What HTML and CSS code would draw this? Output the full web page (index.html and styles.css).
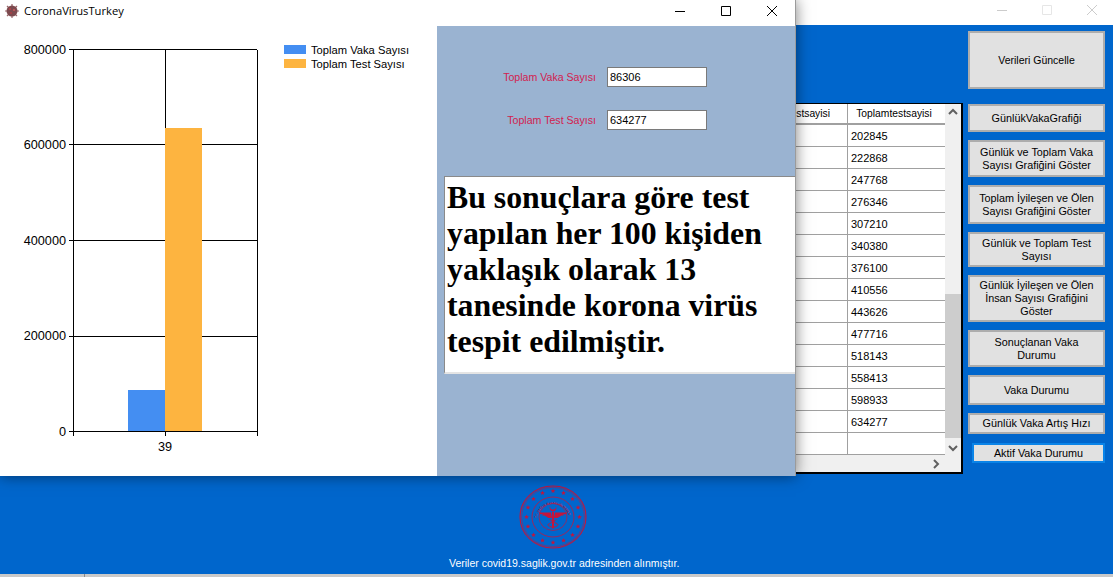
FILE: index.html
```html
<!DOCTYPE html>
<html lang="en">
<head>
    <meta charset="UTF-8">
    <meta name="viewport" content="width=device-width, initial-scale=1.0">
    <title>CoronaVirusTurkey</title>
    <link rel="stylesheet" href="styles.css">
</head>
<body>
    <!-- main window, behind -->
    <div class="window back-window">
        <div class="back-title">
            <svg class="ctrl" width="12" height="12" viewBox="0 0 12 12"><path d="M1 6.500h10" stroke="#ccc" fill="none"/></svg>
            <svg class="ctrl" width="12" height="12" viewBox="0 0 12 12"><path d="M1.500 1.500h9v9h-9z" stroke="#e6e6e6" fill="none"/></svg>
            <svg class="ctrl" width="12" height="12" viewBox="0 0 12 12"><path d="M1 1l10 10M11 1L1 11" stroke="#ccc" fill="none"/></svg>
        </div>
        <div class="back-body">
            <div class="back-row">
                <div class="grid">
                    <table class="grid-table">
                        <thead>
                            <tr><th class="col-a">Gunluktestsayisi</th><th class="col-b">Toplamtestsayisi</th></tr>
                        </thead>
                        <tbody>
                            <tr><td></td><td>202845</td></tr>
                            <tr><td></td><td>222868</td></tr>
                            <tr><td></td><td>247768</td></tr>
                            <tr><td></td><td>276346</td></tr>
                            <tr><td></td><td>307210</td></tr>
                            <tr><td></td><td>340380</td></tr>
                            <tr><td></td><td>376100</td></tr>
                            <tr><td></td><td>410556</td></tr>
                            <tr><td></td><td>443626</td></tr>
                            <tr><td></td><td>477716</td></tr>
                            <tr><td></td><td>518143</td></tr>
                            <tr><td></td><td>558413</td></tr>
                            <tr><td></td><td>598933</td></tr>
                            <tr><td></td><td>634277</td></tr>
                            <tr><td></td><td></td></tr>
                        </tbody>
                    </table>
                    <div class="vscroll">
                        <svg width="16" height="17" viewBox="0 0 16 17"><path d="M4 10l4-4 4 4" stroke="#606060" stroke-width="2" fill="none"/></svg>
                        <div class="vscroll-track"><div class="vscroll-thumb"></div></div>
                        <svg width="16" height="17" viewBox="0 0 16 17"><path d="M4 7l4 4 4-4" stroke="#606060" stroke-width="2" fill="none"/></svg>
                    </div>
                    <div class="hscroll">
                        <svg width="17" height="17" viewBox="0 0 17 17"><path d="M6 4l4 4-4 4" stroke="#606060" stroke-width="2" fill="none"/></svg>
                    </div>
                </div>
                <div class="buttons">
                    <button class="btn btn-update">Verileri Güncelle</button>
                    <button class="btn btn-daily">GünlükVakaGrafiği</button>
                    <button class="btn btn-two">Günlük ve Toplam Vaka Sayısı Grafiğini Göster</button>
                    <button class="btn btn-two-b">Toplam İyileşen ve Ölen Sayısı Grafiğini Göster</button>
                    <button class="btn btn-two-c">Günlük ve Toplam Test Sayısı</button>
                    <button class="btn btn-three">Günlük İyileşen ve Ölen İnsan Sayısı Grafiğini Göster</button>
                    <button class="btn btn-two">Sonuçlanan Vaka Durumu</button>
                    <button class="btn btn-case">Vaka Durumu</button>
                    <button class="btn btn-small">Günlük Vaka Artış Hızı</button>
                    <button class="btn btn-active">Aktif Vaka Durumu</button>
                </div>
            </div>
            <div class="footer">
                <svg class="logo" width="68" height="64" viewBox="-34 -32 68 64">
                    <defs>
                        <polygon id="star" points="0,-2.4 0.7,-0.7 2.4,-0.7 1,0.4 1.5,2.1 0,1.1 -1.5,2.1 -1,0.4 -2.4,-0.7 -0.7,-0.7"/>
                        <path id="ringText" d="M-16.5 3a16.5 16 0 1 1 33 0"/>
                    </defs>
                    <g fill="none" stroke="#c4153c">
                        <ellipse rx="33" ry="31" stroke-width="1.1"/>
                        <ellipse rx="31.4" ry="29.6" stroke-width=".5"/>
                        <ellipse rx="21" ry="20" stroke-width=".8"/>
                        <ellipse rx="14" ry="13.5" stroke-width=".7"/>
                    </g>
                    <g fill="#c4153c">
                        <use href="#star" x="0" y="-26"/>
                        <use href="#star" x="10.500" y="-24"/>
                        <use href="#star" x="19.500" y="-18"/>
                        <use href="#star" x="25" y="-9.500"/>
                        <use href="#star" x="26.500" y="0"/>
                        <use href="#star" x="25" y="9.500"/>
                        <use href="#star" x="19.500" y="18"/>
                        <use href="#star" x="10.500" y="23.500"/>
                        <use href="#star" x="0" y="25.500"/>
                        <use href="#star" x="-10.500" y="23.500"/>
                        <use href="#star" x="-19.500" y="18"/>
                        <use href="#star" x="-25" y="9.500"/>
                        <use href="#star" x="-26.500" y="0"/>
                        <use href="#star" x="-25" y="-9.500"/>
                        <use href="#star" x="-19.500" y="-18"/>
                        <use href="#star" x="-10.500" y="-24"/>
                        <text class="logo-text"><textPath href="#ringText" startOffset="2">T.C. SAĞLIK BAKANLIĞI WORLD</textPath></text>
                        <path d="M-14.500 -4.500H-2l1 5.500h-3.500l-4-2.500h-2.500l1-1.200h-2.500zM14.500 -4.500H2l-1 5.500h3.500l4-2.500h2.500l-1-1.200h2.500z"/>
                        <path d="M-1 -5h2V11.500h-2z"/>
                        <path d="M-3 -10.500a3.400 3.400 0 1 0 6 0 3 3 0 0 1-6 0z"/>
                    </g>
                    <path d="M-3.500 2.500c3.500 1.500 3.500 2.500 0 4s0 3 3.500 4M3.500 2.500c-3.500 1.500-3.500 2.500 0 4s0 3-3.500 4" stroke="#c4153c" fill="none" stroke-width="1"/>
                </svg>
                <div class="source">Veriler covid19.saglik.gov.tr adresinden alınmıştır.</div>
            </div>
        </div>
    </div>
    <div class="desk-strip"></div>

    <!-- chart window, in front -->
    <div class="window front-window">
        <div class="front-title">
            <svg class="virus" width="16" height="16" viewBox="0 0 16 16">
                <path d="M8 1v14M1 8h14M3 3l10 10M13 3L3 13" stroke="#9a6569" stroke-width="1.200"/>
                <circle cx="8" cy="8" r="5.500" fill="#7c4a4e"/>
                <circle cx="6" cy="6" r="1.100" fill="#b8444a"/>
                <circle cx="10" cy="7" r="1.100" fill="#c9565a"/>
                <circle cx="7" cy="10" r="1.100" fill="#a93f45"/>
            </svg>
            <span class="front-name">CoronaVirusTurkey</span>
            <div class="front-ctrls">
                <svg width="12" height="12" viewBox="0 0 12 12"><path d="M1 6.500h10" stroke="#000" fill="none"/></svg>
                <svg width="12" height="12" viewBox="0 0 12 12"><path d="M1.500 1.500h9v9h-9z" stroke="#000" fill="none"/></svg>
                <svg width="12" height="12" viewBox="0 0 12 12"><path d="M1 1l10 10M11 1L1 11" stroke="#000" fill="none"/></svg>
            </div>
        </div>
        <div class="front-body">
            <div class="chart-pane">
                <svg class="chart" width="437" height="450" viewBox="0 26 437 450">
                    <rect x="128" y="390" width="37" height="41" fill="#448ef2"/>
                    <rect x="165" y="128" width="37" height="303" fill="#fdb440"/>
                    <g stroke="#000" fill="none" shape-rendering="crispEdges">
                        <path d="M69 49.500H257M69 144.500H165M202 144.500H257M69 240.500H165M202 240.500H257M69 336.500H165M202 336.500H257M69 431.500H257"/>
                        <path d="M73.500 49.500V436M165.500 49.500V128M165.500 431V436M257.500 49.500V436"/>
                    </g>
                    <g class="axis-label" text-anchor="end">
                        <text x="66" y="54">800000</text>
                        <text x="66" y="149">600000</text>
                        <text x="66" y="245">400000</text>
                        <text x="66" y="340">200000</text>
                        <text x="66" y="436">0</text>
                    </g>
                    <text class="axis-label" x="165" y="451" text-anchor="middle">39</text>
                    <rect x="284" y="45" width="22" height="9" fill="#448ef2"/>
                    <rect x="284" y="59" width="22" height="9" fill="#fdb440"/>
                    <text class="legend-label" x="311" y="54">Toplam Vaka Sayısı</text>
                    <text class="legend-label" x="311" y="68">Toplam Test Sayısı</text>
                </svg>
            </div>
            <div class="side-pane">
                <div class="field">
                    <label class="field-label" for="vaka">Toplam Vaka Sayısı</label>
                    <input class="field-input" id="vaka" type="text" value="86306">
                </div>
                <div class="field">
                    <label class="field-label" for="test">Toplam Test Sayısı</label>
                    <input class="field-input" id="test" type="text" value="634277">
                </div>
                <div class="result">Bu sonuçlara göre test yapılan her 100 kişiden yaklaşık olarak 13 tanesinde korona virüs tespit edilmiştir.</div>
            </div>
        </div>
    </div>
</body>
</html>
```

FILE: styles.css
```css
html, body {
    margin: 0;
    padding: 0;
    height: 100%;
    overflow: hidden;
}

body {
    position: relative;
    background: #c9c9c9;
    font-family: "Liberation Sans", Arial, sans-serif;
    color: #000;
}

.window {
    position: absolute;
    top: 0;
    left: 0;
}

.back-window {
    width: 1113px;
    height: 574px;
    display: flex;
    flex-direction: column;
}

.desk-strip {
    position: absolute;
    top: 574px;
    left: 84px;
    width: 1px;
    height: 3px;
    background: #8a8a8a;
}

.back-title {
    height: 25px;
    background: #fff;
    display: flex;
    justify-content: flex-end;
    align-items: center;
    gap: 33px;
    padding: 0 15px 6px 0;
    box-sizing: border-box;
}

.back-body {
    flex: 1;
    background: #0066cc;
    display: flex;
    flex-direction: column;
}

.back-row {
    display: flex;
    justify-content: flex-end;
    gap: 5px;
    padding: 6px 8px 0 0;
    height: 451px;
    box-sizing: border-box;
}

.grid {
    position: relative;
    width: 261px;
    height: 368px;
    margin-top: 72px;
    background: #f0f0f0;
    border: 1px solid #000;
    border-width: 1px 2px 2px 0;
    display: flex;
}

.grid-table {
    width: 245px;
    border-collapse: separate;
    border-spacing: 0;
    table-layout: fixed;
    background: #fff;
    font-size: 11px;
    align-self: flex-start;
}

.grid-table th {
    height: 19px;
    padding: 0;
    font-weight: normal;
    font-size: 10.300px;
    background: #fff;
    border-right: 1px solid #a0a0a0;
    border-bottom: 2px solid #a0a0a0;
}

.grid-table .col-a {
    width: 148px;
    text-align: right;
    padding-right: 17px;
    box-sizing: border-box;
}

.grid-table .col-b {
    border-right: 0;
    padding-right: 5px;
}

.grid-table td {
    height: 21px;
    padding: 0 0 0 3px;
    border-right: 1px solid #a0a0a0;
    border-bottom: 1px solid #a0a0a0;
    line-height: 14px;
}

.grid-table td:last-child {
    border-right: 0;
}

.vscroll {
    width: 16px;
    height: 352px;
    background: #f0f0f0;
    display: flex;
    flex-direction: column;
}

.vscroll svg {
    flex: none;
}

.vscroll-track {
    flex: 1;
    padding-top: 173px;
}

.vscroll-thumb {
    height: 144px;
    background: #cdcdcd;
}

.hscroll {
    position: absolute;
    left: 0;
    bottom: 0;
    width: 245px;
    height: 16px;
    background: #f0f0f0;
    display: flex;
    justify-content: flex-end;
}

.buttons {
    width: 137px;
    display: flex;
    flex-direction: column;
    align-items: flex-end;
}

.btn {
    display: block;
    width: 137px;
    padding: 0 6px;
    margin: 0 0 8px;
    background: #e1e1e1;
    border: 2px solid #adadad;
    box-sizing: border-box;
    font-family: "Liberation Sans", Arial, sans-serif;
    font-size: 10.800px;
    line-height: 13px;
    color: #000;
    text-align: center;
}

.btn-update {
    height: 58px;
    margin-bottom: 15px;
    font-size: 10.500px;
}

.btn-daily {
    height: 28px;
}

.btn-two {
    height: 37px;
}

.btn-two-b {
    height: 39px;
}

.btn-two-c {
    height: 35px;
}

.btn-three {
    height: 47px;
}

.btn-case {
    height: 30px;
}

.btn-small {
    height: 21px;
    margin-bottom: 9px;
}

.btn-active {
    width: 133px;
    height: 20px;
    border-color: #0a84e8;
}

.footer {
    flex: 1;
    display: flex;
    flex-direction: column;
    padding-top: 9px;
}

.logo {
    display: block;
    margin-left: 519px;
}

.source {
    margin-left: 449px;
    margin-top: 7px;
    font-size: 10.500px;
    line-height: 14px;
    color: #fff;
}

.logo-text {
    font-size: 2.800px;
    font-family: "Liberation Sans", Arial, sans-serif;
    font-weight: bold;
}

.front-window {
    width: 795px;
    height: 476px;
    background: #fff;
    border-right: 1px solid #9b9b9b;
    box-shadow: 0 0 14px rgba(0, 0, 0, 0.5);
    display: flex;
    flex-direction: column;
}

.front-title {
    height: 26px;
    display: flex;
    align-items: center;
    padding: 0 0 5px 4px;
    box-sizing: border-box;
    font-family: "Open Sans", sans-serif;
    font-size: 11.200px;
}

.virus {
    margin-right: 4px;
}

.front-name {
    flex: 1;
}

.front-ctrls {
    display: flex;
    gap: 34px;
    padding-right: 17px;
}

.front-body {
    flex: 1;
    display: flex;
}

.chart-pane {
    width: 437px;
}

.chart {
    display: block;
}

.axis-label {
    font-size: 12.700px;
    fill: #000;
}

.legend-label {
    font-size: 11.200px;
    fill: #000;
}

.side-pane {
    flex: 1;
    background: #9ab3d1;
    padding-top: 41px;
    box-sizing: border-box;
    display: flex;
    flex-direction: column;
}

.field {
    display: flex;
    align-items: center;
    height: 20px;
    margin-bottom: 23px;
}

.field-label {
    width: 159px;
    text-align: right;
    margin-right: 11px;
    font-size: 10.600px;
    color: #d2214f;
}

.field-input {
    width: 100px;
    height: 20px;
    padding: 0 2px;
    border: 1px solid #7a7a7a;
    box-sizing: border-box;
    font-family: "Liberation Sans", Arial, sans-serif;
    font-size: 11px;
    background: #fff;
    color: #000;
    outline: 0;
}

.result {
    margin: 23px 0 0 7px;
    height: 198px;
    background: #fff;
    border-top: 1px solid #8a8a8a;
    border-left: 1px solid #8a8a8a;
    border-bottom: 2px solid #e4e4e4;
    box-sizing: border-box;
    padding: 3px 10px 0 2px;
    font-family: "Liberation Serif", "Times New Roman", serif;
    font-weight: bold;
    font-size: 31.800px;
    line-height: 36px;
}
```
